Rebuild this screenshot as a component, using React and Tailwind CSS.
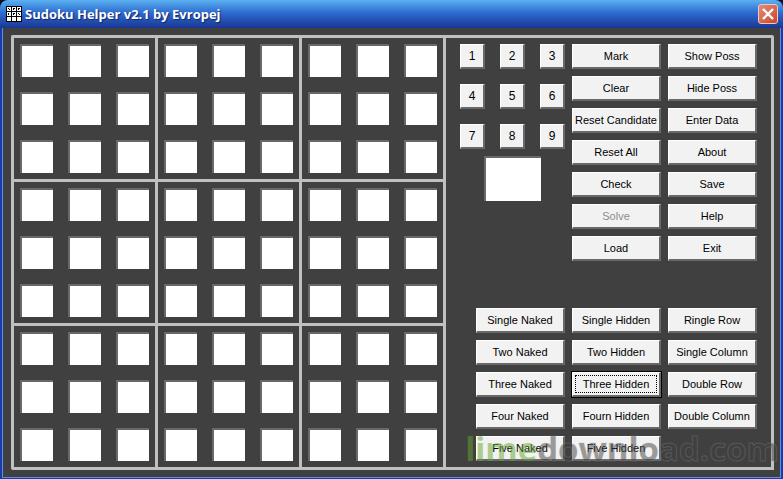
import React from 'react'
import clsx from 'clsx'

const digits = [1, 2, 3, 4, 5, 6, 7, 8, 9]

const actions = [
  'Mark', 'Show Poss',
  'Clear', 'Hide Poss',
  'Reset Candidate', 'Enter Data',
  'Reset All', 'About',
  'Check', 'Save',
  'Solve', 'Help',
  'Load', 'Exit',
]

const strategies = [
  'Single Naked', 'Single Hidden', 'Ringle Row',
  'Two Naked', 'Two Hidden', 'Single Column',
  'Three Naked', 'Three Hidden', 'Double Row',
  'Four Naked', 'Fourn Hidden', 'Double Column',
  'Five Naked', 'Five Hidden',
]

const PushButton = ({ label, isDefault, disabled, small }) => (
  <button
    type="button"
    disabled={disabled}
    className={clsx(
      'relative h-[25px] whitespace-nowrap border-t border-l border-r-2 border-b-2 border-t-white border-l-white border-r-[#696969] border-b-[#696969] bg-[#f2f2f2] text-center leading-[20px]',
      small ? 'w-[25px] text-[12px]' : 'w-[89px] text-[11px]',
      disabled ? 'text-[#8c8c8c]' : 'text-black',
      isDefault && 'outline outline-black'
    )}
  >
    {label}
    {isDefault && <span className="absolute inset-[2px] border border-dotted border-black"></span>}
  </button>
)

const Block = ({ number }) => (
  <div className="grid grid-cols-3 gap-[15px] border-r-[3px] border-b-[3px] border-[#c0c0c0] p-[6px]">
    {digits.map((cell) => (
      <input
        key={cell}
        type="text"
        aria-label={`Block ${number}, cell ${cell}`}
        className="h-[33px] w-[33px] border-t-2 border-l-2 border-[#696969] bg-white text-center"
      />
    ))}
  </div>
)

const TitleBar = () => (
  <header className="flex h-7 items-center rounded-t-lg bg-linear-to-b from-[#5cb0f0] via-[#2f6cd0] via-45% to-[#1a3694] pl-[6px] pr-[5px]">
    <svg width="16" height="16" viewBox="0 0 16 16" className="mr-[3px]">
      <rect width="16" height="16" fill="#000" />
      {[1, 6, 11].map((y) => [1, 6, 11].map((x) => (
        <rect key={`${x}-${y}`} x={x} y={y} width="4" height="4" fill="#fff" />
      )))}
      {/* pencilled marks in the first two rows */}
      <path d="M2 2h1v1h1v1h-1v-1h-1zM7 2h2v1h-1v1h-1zM12 2h2v1h-1v1h-1zM2 7h1v2h-1zM7 7h2v1h-1v1h-1zM12 7h1v1h1v1h-1v-1h-1z" fill="#000" />
    </svg>
    <h1 className="flex-1 font-['Open_Sans','Noto_Sans',sans-serif] text-[13px] leading-[20px] font-bold text-white text-shadow-[1px_1px_1px_#10286c]">
      Sudoku Helper v2.1 by Evropej
    </h1>
    <button type="button" aria-label="Close" className="h-5 w-5 rounded-[3px] border border-[#f0c8c4] bg-linear-to-br from-[#e08c7c] to-[#cc4420]">
      <svg viewBox="0 0 18 18" stroke="#fff" strokeWidth="2.4">
        <path d="M4 4l10 10M14 4l-10 10" />
      </svg>
    </button>
  </header>
)

const App = () => {
  return (
    <div className="flex min-h-screen flex-col bg-[#0a1030] font-['Liberation_Sans',Arial,sans-serif]">
      <TitleBar />
      <div className="flex flex-1 flex-col border-x-2 border-b border-[#1a3ca8]">
        <main className="flex-1 border-r border-b border-l border-[#5c90e8] bg-[#404040] pt-[7px] pr-[6px] pb-[7px] pl-[8px]">
          <div className="flex rounded-[2px] border-t-[3px] border-l-[3px] border-[#c0c0c0]">
            <section className="grid shrink-0 grid-cols-3">
              {digits.map((n) => <Block key={n} number={n} />)}
            </section>

            <section className="relative flex flex-1 flex-col items-end justify-between border-r-[3px] border-b-[3px] border-[#c0c0c0] px-[14px] py-[6px]">
              <div className="flex gap-[7px]">
                <div>
                  <div className="grid grid-cols-3 gap-[15px]">
                    {digits.map((n) => <PushButton key={n} label={n} small />)}
                  </div>
                  <input type="text" aria-label="Selected" className="mt-[7px] ml-6 block h-[45px] w-[57px] border-t-2 border-l-2 border-[#696969] bg-white text-center" />
                </div>
                <div className="grid grid-cols-2 gap-[7px]">
                  {actions.map((label) => <PushButton key={label} label={label} disabled={label === 'Solve'} />)}
                </div>
              </div>
              <div className="grid grid-cols-3 gap-[7px]">
                {strategies.map((label) => <PushButton key={label} label={label} isDefault={label === 'Three Hidden'} />)}
              </div>
              <div className="pointer-events-none absolute -right-2 -bottom-1.5 font-['Open_Sans',sans-serif] text-[33px] font-bold leading-[48px] text-[#404040]/50 [-webkit-text-stroke:1px_#a0a0a040]">
                <span className="text-[#64a52d]/50 [-webkit-text-stroke:0]">lime</span>download.com
              </div>
            </section>
          </div>
        </main>
      </div>
    </div>
  )
}

export default App
